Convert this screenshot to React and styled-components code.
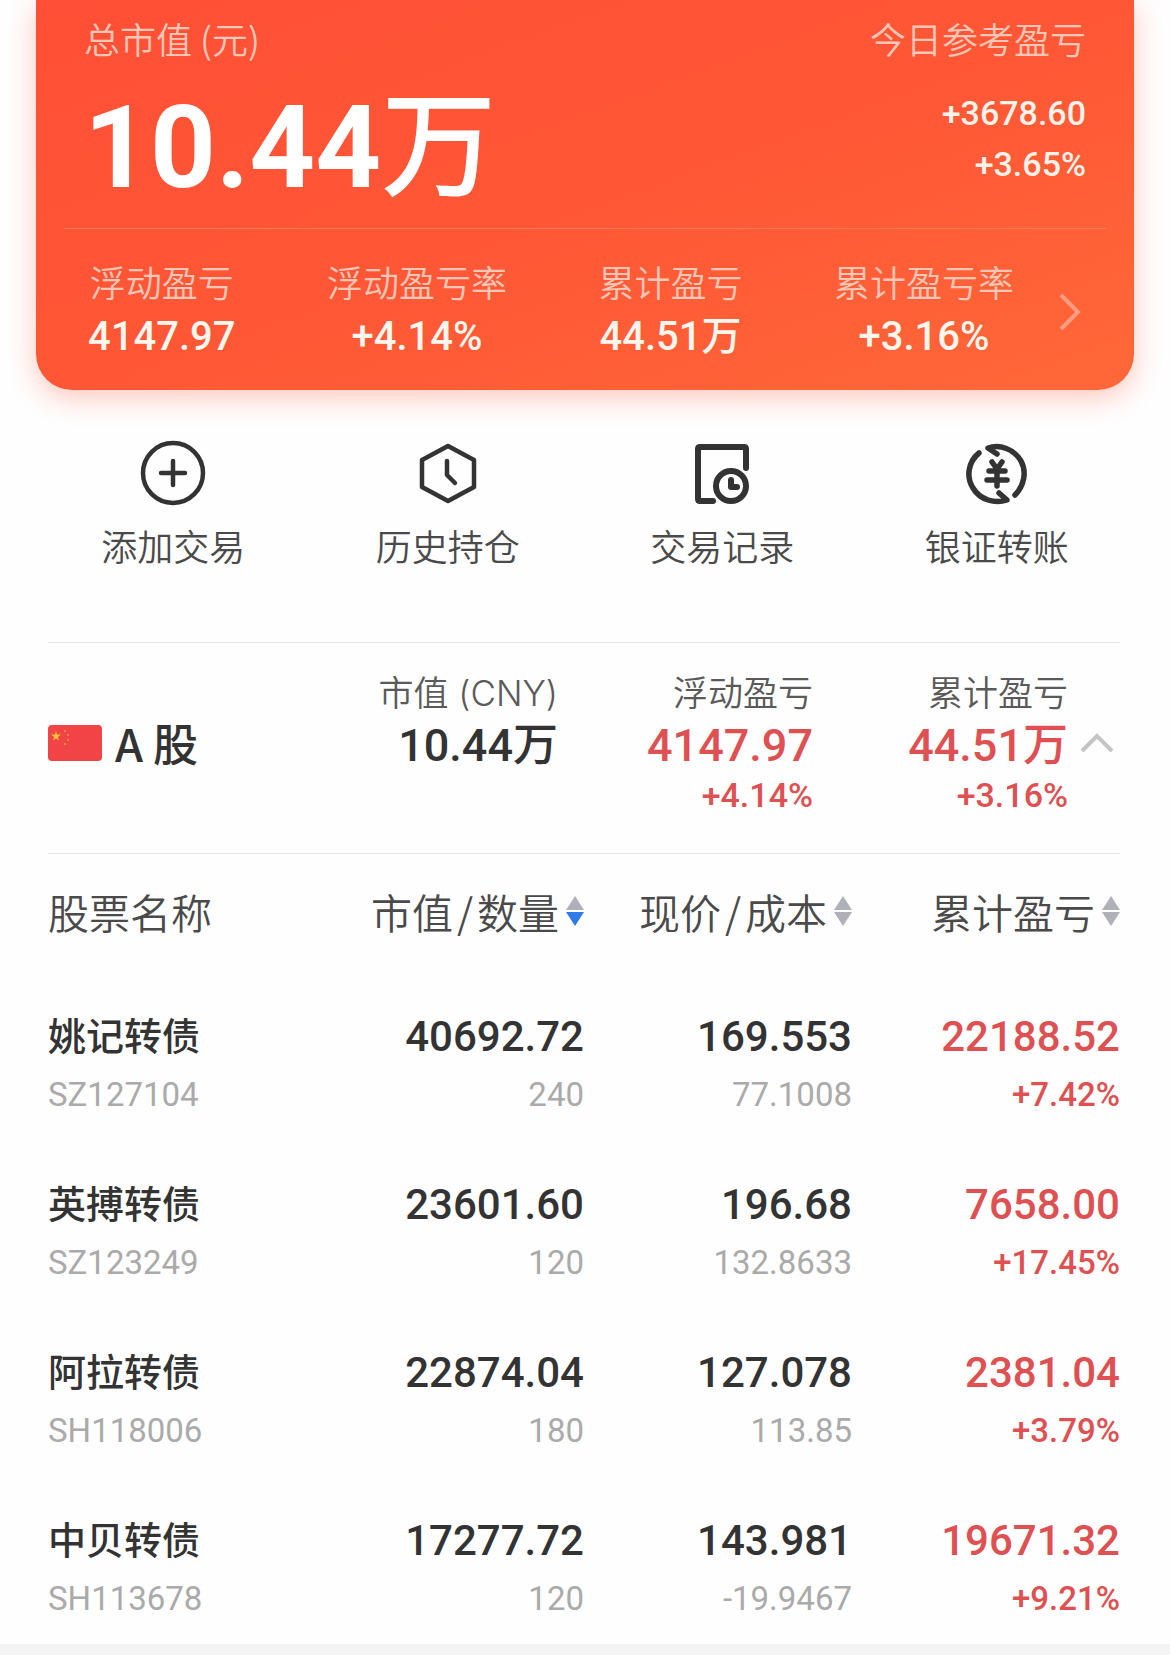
import React from 'react';
import styled, { createGlobalStyle } from 'styled-components';

const summary = [
    { label: '浮动盈亏', value: '4147.97' },
    { label: '浮动盈亏率', value: '+4.14%' },
    { label: '累计盈亏', value: '44.51万' },
    { label: '累计盈亏率', value: '+3.16%' },
];

const holdings = [
    { name: '姚记转债', code: 'SZ127104', value: '40692.72', amount: '240', price: '169.553', cost: '77.1008', profit: '22188.52', rate: '+7.42%' },
    { name: '英搏转债', code: 'SZ123249', value: '23601.60', amount: '120', price: '196.68', cost: '132.8633', profit: '7658.00', rate: '+17.45%' },
    { name: '阿拉转债', code: 'SH118006', value: '22874.04', amount: '180', price: '127.078', cost: '113.85', profit: '2381.04', rate: '+3.79%' },
    { name: '中贝转债', code: 'SH113678', value: '17277.72', amount: '120', price: '143.981', cost: '-19.9467', profit: '19671.32', rate: '+9.21%' },
];

const AddIcon = () => (
    <Icon viewBox="0 0 66 66" strokeWidth="4.500">
        <circle cx="33" cy="33" r="30" />
        <path d="M33 21v24M21 33h24" />
    </Icon>
);

const HistoryIcon = () => (
    <Icon viewBox="0 0 66 66" strokeWidth="4.500">
        <path d="M33 6L59 20V47L33 61L7 47V20Z" />
        <path d="M32 21V35L40 43" />
    </Icon>
);

const RecordIcon = () => (
    <Icon viewBox="0 0 66 66" strokeWidth="6">
        <path d="M57 28V9Q57 7 55 7H11Q9 7 9 9V59Q9 61 11 61H24" />
        <circle cx="42" cy="46" r="15" />
        <path d="M42 40V47H48" />
    </Icon>
);

const TransferIcon = () => (
    <Icon viewBox="0 0 66 66" strokeWidth="5.500">
        <path d="M33 14L24 8C36 4 50 9 57 21C63 32 60 46 51 55" />
        <path d="M15 13C4 22 2 37 9 48C16 60 31 64 43 60L35 53" />
        <path d="M28 22L33 29L38 22M25 31H41M23 40H43M33 30V46" />
    </Icon>
);

const actions = [
    { label: '添加交易', icon: AddIcon },
    { label: '历史持仓', icon: HistoryIcon },
    { label: '交易记录', icon: RecordIcon },
    { label: '银证转账', icon: TransferIcon },
];

const Flag = () => (
    <FlagSvg viewBox="0 0 54 36" aria-hidden="true">
        <rect width="54" height="36" rx="4" fill="#f24346" />
        <path d="M8 6l1.200 3.600h3.800l-3.100 2.300 1.200 3.700L8 13.400l-3.100 2.200 1.200-3.700L3 9.600h3.800z" fill="#fdc32f" />
        <g fill="#f59a3a">
            <circle cx="17" cy="6" r="1" />
            <circle cx="20" cy="10" r="1" />
            <circle cx="20" cy="15" r="1" />
            <circle cx="17" cy="19" r="1" />
        </g>
    </FlagSvg>
);

const SortButton = ({ children, active }) => (
    <Sort type="button">
        <span>{children}</span>
        <svg width="18" height="30" viewBox="0 0 18 30" aria-hidden="true">
            <path d="M9 0L18 14H0Z" fill="#b0b0b8" />
            <path d="M9 30L18 16H0Z" fill={active ? '#2f7be8' : '#b0b0b8'} />
        </svg>
    </Sort>
);

export default function App() {
    return (
        <Page>
            <GlobalStyle />
            <Card>
                <Total>
                    <div>
                        <CardLabel>总市值 (元)</CardLabel>
                        <BigValue>10.44<span>万</span></BigValue>
                    </div>
                    <Today>
                        <CardLabel>今日参考盈亏</CardLabel>
                        <TodayValue>+3678.60</TodayValue>
                        <TodayValue>+3.65%</TodayValue>
                    </Today>
                </Total>
                <Metrics>
                    <MetricList>
                        {summary.map((item) => (
                            <Metric key={item.label}>
                                <CardLabel>{item.label}</CardLabel>
                                <MetricValue>{item.value}</MetricValue>
                            </Metric>
                        ))}
                    </MetricList>
                    <ArrowButton type="button" aria-label="详情">
                        <svg width="24" height="38" viewBox="0 0 24 38">
                            <path d="M3 2L20 19L3 36" fill="none" stroke="#ff9d80" strokeWidth="4" />
                        </svg>
                    </ArrowButton>
                </Metrics>
            </Card>
            <Actions>
                {actions.map(({ label, icon: ActionIcon }) => (
                    <Action type="button" key={label}>
                        <ActionIcon />
                        {label}
                    </Action>
                ))}
            </Actions>
            <Content>
                <Market>
                    <MarketGrid>
                        <MarketName><Flag />A 股</MarketName>
                        <MarketCell>
                            <MarketLabel>市值 (CNY)</MarketLabel>
                            <MarketValue>10.44万</MarketValue>
                        </MarketCell>
                        <MarketCell $up>
                            <MarketLabel>浮动盈亏</MarketLabel>
                            <MarketValue>4147.97</MarketValue>
                            <MarketRate>+4.14%</MarketRate>
                        </MarketCell>
                        <MarketCell $up>
                            <MarketLabel>累计盈亏</MarketLabel>
                            <MarketValue>44.51万</MarketValue>
                            <MarketRate>+3.16%</MarketRate>
                        </MarketCell>
                    </MarketGrid>
                    <FoldButton type="button" aria-label="收起">
                        <svg width="34" height="22" viewBox="0 0 34 22">
                            <path d="M2 19L17 4L32 19" fill="none" stroke="#c4c4c4" strokeWidth="4" />
                        </svg>
                    </FoldButton>
                </Market>
                <Table>
                    <thead>
                        <tr>
                            <HeadCell scope="col">股票名称</HeadCell>
                            <HeadCell scope="col"><SortButton active>市值<Slash>/</Slash>数量</SortButton></HeadCell>
                            <HeadCell scope="col"><SortButton>现价<Slash>/</Slash>成本</SortButton></HeadCell>
                            <HeadCell scope="col"><SortButton>累计盈亏</SortButton></HeadCell>
                        </tr>
                    </thead>
                    <tbody>
                        {holdings.map((row) => (
                            <tr key={row.code}>
                                <Cell>
                                    <Name>{row.name}</Name>
                                    <Sub>{row.code}</Sub>
                                </Cell>
                                <Cell>
                                    <Value>{row.value}</Value>
                                    <Sub>{row.amount}</Sub>
                                </Cell>
                                <Cell>
                                    <Value>{row.price}</Value>
                                    <Sub>{row.cost}</Sub>
                                </Cell>
                                <Cell>
                                    <Value $up>{row.profit}</Value>
                                    <Sub $up>{row.rate}</Sub>
                                </Cell>
                            </tr>
                        ))}
                    </tbody>
                </Table>
            </Content>
        </Page>
    );
}

const numberFont = 'Roboto, "Noto Sans CJK SC", sans-serif';
const textFont = '"Noto Sans CJK SC", sans-serif';
const red = '#de5052';

const GlobalStyle = createGlobalStyle`
* {
    box-sizing: border-box;
}
body {
    margin: 0;
    background: #f4f4f4;
    color: #333;
    font-family: ${textFont};
}
button {
    padding: 0;
    border: 0;
    background: none;
    color: inherit;
    font: inherit;
    cursor: pointer;
}
svg {
    display: block;
}
`

const Page = styled.main`
background: #fefefe;
padding-bottom: 4px;
`

const Card = styled.section`
margin: 0 36px;
padding: 13px 28px 22px;
border-radius: 0 0 36px 36px;
background: linear-gradient(160deg, #ff4f36 0%, #ff5836 55%, #ff6838 100%);
box-shadow: 0 8px 28px rgba(255, 84, 54, 0.32);
color: #fff;
`

const Total = styled.div`
display: flex;
justify-content: space-between;
padding: 0 20px 23px;
border-bottom: 1px solid #ff7a56;
`

const CardLabel = styled.div`
font-size: 36px;
line-height: 50px;
font-weight: 350;
color: #ffc6b6;
white-space: nowrap;
`

const BigValue = styled.div`
margin-top: 28px;
font-family: ${numberFont};
font-size: 115px;
line-height: 114px;
font-weight: 700;
span {
    font-weight: 500;
}
`

const Today = styled.div`
text-align: right;
${CardLabel} {
    margin-bottom: 25px;
}
`

const TodayValue = styled.div`
font-family: ${numberFont};
font-size: 34px;
line-height: 51px;
font-weight: 500;
color: #fff3e9;
`

const Metrics = styled.div`
display: flex;
align-items: center;
gap: 44px;
padding: 27px 24px 0;
`

const MetricList = styled.div`
flex: 1;
display: flex;
justify-content: space-between;
`

const Metric = styled.div`
text-align: center;
`

const MetricValue = styled.div`
font-family: ${numberFont};
font-size: 40px;
line-height: 62px;
font-weight: 500;
color: #fff6ee;
`

const ArrowButton = styled.button`
flex: none;
`

const Actions = styled.nav`
display: grid;
grid-template-columns: repeat(4, 1fr);
padding: 50px 36px 72px;
`

const Action = styled.button`
display: flex;
flex-direction: column;
align-items: center;
gap: 14px;
font-size: 36px;
line-height: 50px;
font-weight: 350;
color: #4a4a4a;
`

const Icon = styled.svg.attrs({
    fill: 'none',
    stroke: '#333',
    strokeLinecap: 'round',
    strokeLinejoin: 'round',
    'aria-hidden': true,
})`
width: 66px;
height: 66px;
`

const Content = styled.div`
margin: 0 50px 0 48px;
`

const Market = styled.section`
display: flex;
align-items: center;
padding: 25px 0 36px;
border: solid #e6e6e6;
border-width: 1px 0;
`

const MarketGrid = styled.div`
flex: 1;
display: grid;
grid-template-columns: repeat(4, 1fr);
`

const MarketName = styled.h2`
display: flex;
align-items: center;
gap: 13px;
margin: 0;
font-size: 45px;
line-height: 60px;
font-weight: 500;
`

const FlagSvg = styled.svg`
width: 54px;
height: 36px;
`

const MarketCell = styled.div`
text-align: right;
white-space: nowrap;
color: ${(props) => (props.$up ? red : '#333')};
`

const MarketLabel = styled.div`
font-family: Inter, ${textFont};
font-size: 35px;
line-height: 50px;
font-weight: 350;
color: #5a5a5a;
`

const MarketValue = styled.div`
font-family: ${numberFont};
font-size: 45px;
line-height: 56px;
font-weight: 500;
`

const MarketRate = styled.div`
font-family: ${numberFont};
font-size: 34px;
line-height: 43px;
font-weight: 500;
`

const FoldButton = styled.button`
flex: none;
display: flex;
justify-content: flex-end;
width: 52px;
padding-right: 6px;
`

const Table = styled.table`
width: 100%;
table-layout: fixed;
border-collapse: collapse;
`

const HeadCell = styled.th`
height: 114px;
padding: 0;
font-size: 41px;
line-height: 60px;
font-weight: 350;
color: #4a4a4a;
text-align: right;
white-space: nowrap;
&:first-child {
    text-align: left;
}
`

const Sort = styled.button`
display: inline-flex;
align-items: center;
gap: 7px;
`

const Slash = styled.span`
padding: 0 4px;
`

const Cell = styled.td`
padding: 41px 0 11px;
text-align: right;
&:first-child {
    text-align: left;
}
`

const Name = styled.div`
margin-bottom: 6px;
font-size: 38px;
line-height: 50px;
font-weight: 500;
`

const Value = styled.div`
font-family: ${numberFont};
font-size: 42px;
line-height: 56px;
font-weight: 500;
color: ${(props) => (props.$up ? red : '#333')};
`

const Sub = styled.div`
font-family: ${numberFont};
font-size: 33px;
line-height: 60px;
font-weight: ${(props) => (props.$up ? 500 : 400)};
color: ${(props) => (props.$up ? red : '#aaa')};
`
